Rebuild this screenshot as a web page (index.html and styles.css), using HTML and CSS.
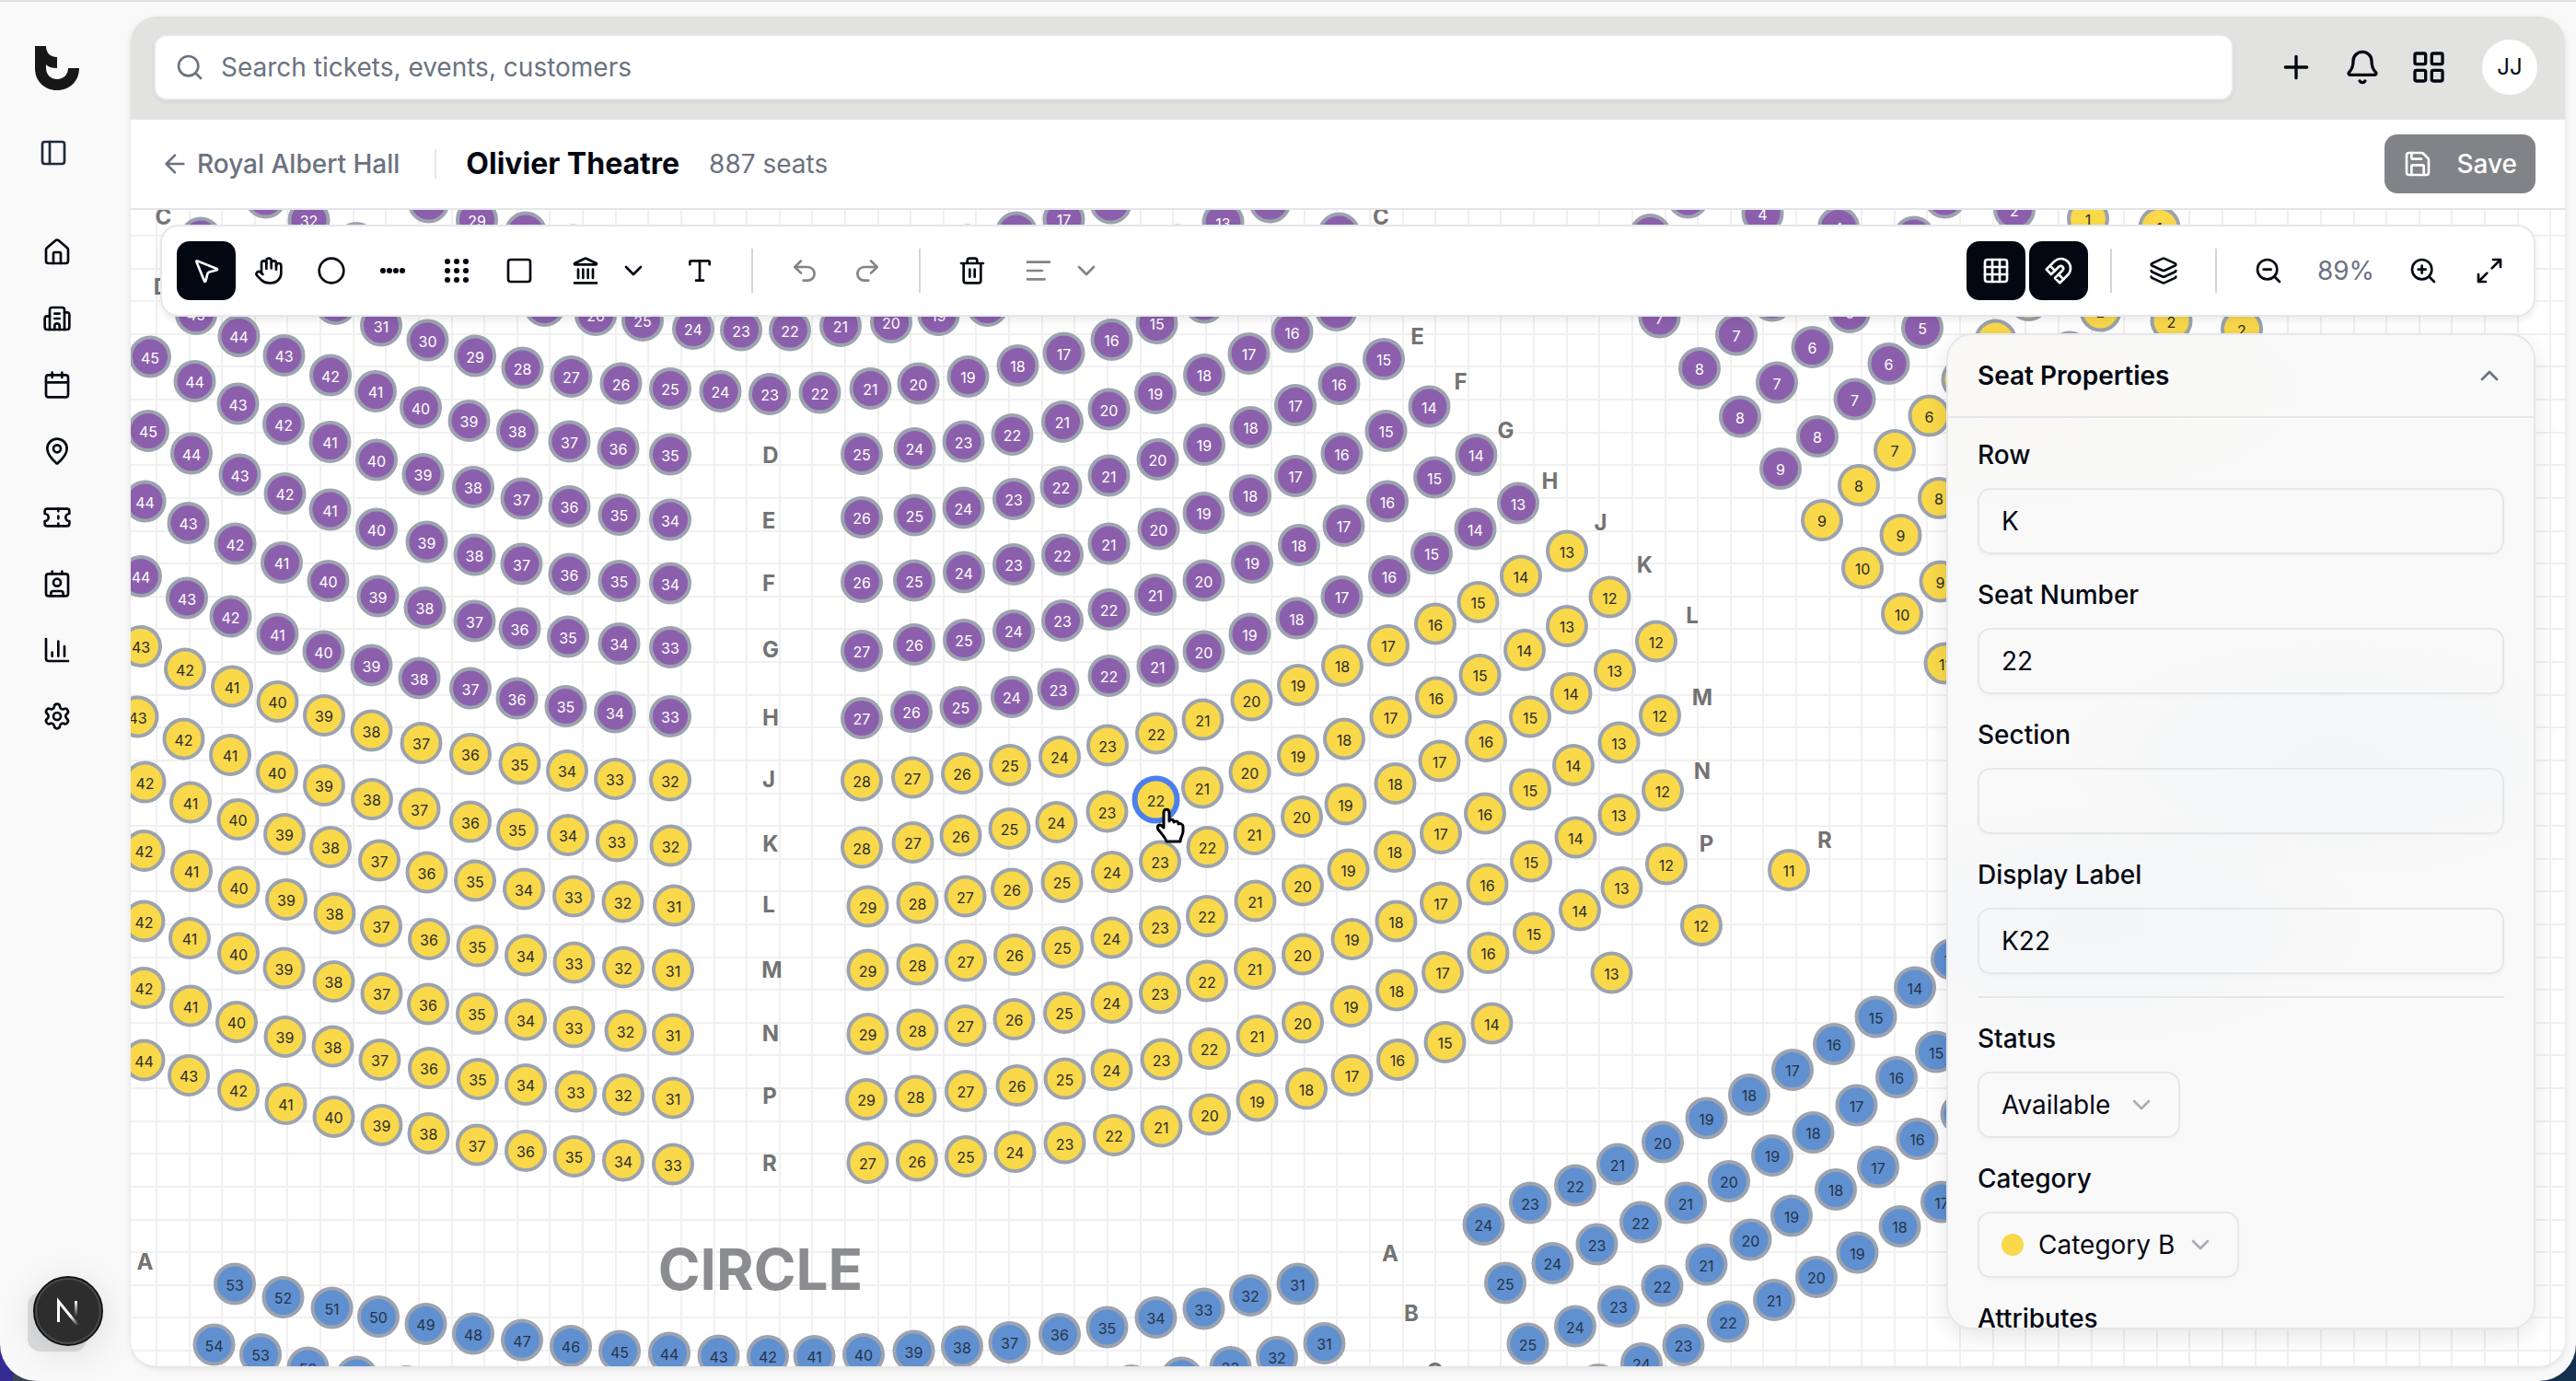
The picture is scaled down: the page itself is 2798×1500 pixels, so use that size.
FILE: index.html
```html
<!DOCTYPE html>
<html lang="en">
<head>
<meta charset="utf-8">
<title>Olivier Theatre – Seat map</title>
<link rel="stylesheet" href="styles.css">
</head>
<body>
<svg class="sprite" aria-hidden="true">
  <symbol id="i-search" viewBox="0 0 24 24"><circle cx="11" cy="11" r="8"/><path d="m21 21-4.34-4.34"/></symbol>
  <symbol id="i-plus" viewBox="0 0 24 24"><path d="M5 12h14M12 5v14"/></symbol>
  <symbol id="i-bell" viewBox="0 0 24 24"><path d="M10.268 21a2 2 0 0 0 3.464 0"/><path d="M3.262 15.326A1 1 0 0 0 4 17h16a1 1 0 0 0 .74-1.673C19.41 13.956 18 12.499 18 8A6 6 0 0 0 6 8c0 4.499-1.411 5.956-2.738 7.326"/></symbol>
  <symbol id="i-apps" viewBox="0 0 24 24"><rect x="3" y="3" width="7" height="7" rx="1"/><rect x="14" y="3" width="7" height="7" rx="1"/><rect x="14" y="14" width="7" height="7" rx="1"/><rect x="3" y="14" width="7" height="7" rx="1"/></symbol>
  <symbol id="i-panel" viewBox="0 0 24 24"><rect x="3" y="3" width="18" height="18" rx="2"/><path d="M9 3v18"/></symbol>
  <symbol id="i-house" viewBox="0 0 24 24"><path d="M15 21v-8a1 1 0 0 0-1-1h-4a1 1 0 0 0-1 1v8"/><path d="M3 10a2 2 0 0 1 .709-1.528l7-5.999a2 2 0 0 1 2.582 0l7 5.999A2 2 0 0 1 21 10v9a2 2 0 0 1-2 2H5a2 2 0 0 1-2-2z"/></symbol>
  <symbol id="i-building" viewBox="0 0 24 24"><path d="M10 12h4M10 8h4M14 21v-3a2 2 0 0 0-4 0v3"/><path d="M6 10H4a2 2 0 0 0-2 2v7a2 2 0 0 0 2 2h16a2 2 0 0 0 2-2V9a2 2 0 0 0-2-2h-2"/><path d="M6 21V5a2 2 0 0 1 2-2h8a2 2 0 0 1 2 2v16"/></symbol>
  <symbol id="i-calendar" viewBox="0 0 24 24"><path d="M8 2v4M16 2v4M3 10h18"/><rect x="3" y="4" width="18" height="18" rx="2"/></symbol>
  <symbol id="i-pin" viewBox="0 0 24 24"><path d="M20 10c0 4.993-5.539 10.193-7.399 11.799a1 1 0 0 1-1.202 0C9.539 20.193 4 14.993 4 10a8 8 0 0 1 16 0"/><circle cx="12" cy="10" r="3"/></symbol>
  <symbol id="i-ticket" viewBox="0 0 24 24"><path d="M2 9a3 3 0 0 1 0 6v2a2 2 0 0 0 2 2h16a2 2 0 0 0 2-2v-2a3 3 0 0 1 0-6V7a2 2 0 0 0-2-2H4a2 2 0 0 0-2 2Z"/><path d="M13 5v2M13 17v2M13 11v2"/></symbol>
  <symbol id="i-contact" viewBox="0 0 24 24"><path d="M16 2v2M8 2v2M7 22v-2a2 2 0 0 1 2-2h6a2 2 0 0 1 2 2v2"/><circle cx="12" cy="11" r="3"/><rect x="3" y="4" width="18" height="18" rx="2"/></symbol>
  <symbol id="i-chart" viewBox="0 0 24 24"><path d="M3 3v16a2 2 0 0 0 2 2h16M18 17V9M13 17V5M8 17v-3"/></symbol>
  <symbol id="i-settings" viewBox="0 0 24 24"><path d="M9.671 4.136a2.34 2.34 0 0 1 4.659 0 2.34 2.34 0 0 0 3.319 1.915 2.34 2.34 0 0 1 2.33 4.033 2.34 2.34 0 0 0 0 3.831 2.34 2.34 0 0 1-2.33 4.033 2.34 2.34 0 0 0-3.319 1.915 2.34 2.34 0 0 1-4.659 0 2.34 2.34 0 0 0-3.32-1.915 2.34 2.34 0 0 1-2.33-4.033 2.34 2.34 0 0 0 0-3.831A2.34 2.34 0 0 1 6.35 6.051a2.34 2.34 0 0 0 3.319-1.915"/><circle cx="12" cy="12" r="3"/></symbol>
  <symbol id="i-back" viewBox="0 0 24 24"><path d="m12 19-7-7 7-7M19 12H5"/></symbol>
  <symbol id="i-save" viewBox="0 0 24 24"><path d="M15.2 3a2 2 0 0 1 1.4.6l3.8 3.8a2 2 0 0 1 .6 1.4V19a2 2 0 0 1-2 2H5a2 2 0 0 1-2-2V5a2 2 0 0 1 2-2z"/><path d="M17 21v-7a1 1 0 0 0-1-1H8a1 1 0 0 0-1 1v7M7 3v4a1 1 0 0 0 1 1h7"/></symbol>
  <symbol id="i-pointer" viewBox="0 0 24 24"><path d="M4.037 4.688a.495.495 0 0 1 .651-.651l16 6.5a.5.5 0 0 1-.063.947l-6.124 1.58a2 2 0 0 0-1.438 1.435l-1.579 6.126a.5.5 0 0 1-.947.063z"/></symbol>
  <symbol id="i-hand" viewBox="0 0 24 24"><path d="M18 11V6a2 2 0 0 0-2-2a2 2 0 0 0-2 2"/><path d="M14 10V4a2 2 0 0 0-2-2a2 2 0 0 0-2 2v2"/><path d="M10 10.500V6a2 2 0 0 0-2-2a2 2 0 0 0-2 2v8"/><path d="M18 8a2 2 0 1 1 4 0v6a8 8 0 0 1-8 8h-2c-2.800 0-4.500-.860-5.990-2.340l-3.600-3.600a2 2 0 0 1 2.830-2.820L7 15"/></symbol>
  <symbol id="i-circle" viewBox="0 0 24 24"><circle cx="12" cy="12" r="10"/></symbol>
  <symbol id="i-row" viewBox="0 0 24 24"><g fill="currentColor" stroke="none"><circle cx="3" cy="12" r="2.300"/><circle cx="8.250" cy="12" r="2.300"/><circle cx="13.500" cy="12" r="2.300"/><circle cx="18.750" cy="12" r="2.300"/></g></symbol>
  <symbol id="i-block" viewBox="0 0 24 24"><g fill="currentColor" stroke="none"><circle cx="4.500" cy="4.500" r="2.300"/><circle cx="12" cy="4.500" r="2.300"/><circle cx="19.500" cy="4.500" r="2.300"/><circle cx="4.500" cy="12" r="2.300"/><circle cx="12" cy="12" r="2.300"/><circle cx="19.500" cy="12" r="2.300"/><circle cx="4.500" cy="19.500" r="2.300"/><circle cx="12" cy="19.500" r="2.300"/><circle cx="19.500" cy="19.500" r="2.300"/></g></symbol>
  <symbol id="i-square" viewBox="0 0 24 24"><rect x="3" y="3" width="18" height="18" rx="2"/></symbol>
  <symbol id="i-landmark" viewBox="0 0 24 24"><path d="M10 18v-7M14 18v-7M18 18v-7M6 18v-7M3 22h18"/><path d="M11.120 2.198a2 2 0 0 1 1.760.006l7.866 3.847c.476.233.310.949-.220.949H3.474c-.530 0-.695-.716-.220-.949z"/></symbol>
  <symbol id="i-down" viewBox="0 0 24 24"><path d="m6 9 6 6 6-6"/></symbol>
  <symbol id="i-up" viewBox="0 0 24 24"><path d="m18 15-6-6-6 6"/></symbol>
  <symbol id="i-type" viewBox="0 0 24 24"><path d="M12 4v16M4 7V5a1 1 0 0 1 1-1h14a1 1 0 0 1 1 1v2M9 20h6"/></symbol>
  <symbol id="i-undo" viewBox="0 0 24 24"><path d="M9 14 4 9l5-5"/><path d="M4 9h10.500a5.500 5.500 0 0 1 5.500 5.500a5.500 5.500 0 0 1-5.500 5.500H11"/></symbol>
  <symbol id="i-redo" viewBox="0 0 24 24"><path d="m15 14 5-5-5-5"/><path d="M20 9H9.500A5.500 5.500 0 0 0 4 14.500A5.500 5.500 0 0 0 9.500 20H13"/></symbol>
  <symbol id="i-trash" viewBox="0 0 24 24"><path d="M10 11v6M14 11v6M19 6v14a2 2 0 0 1-2 2H7a2 2 0 0 1-2-2V6M3 6h18M8 6V4a2 2 0 0 1 2-2h4a2 2 0 0 1 2 2v2"/></symbol>
  <symbol id="i-align" viewBox="0 0 24 24"><path d="M21 5H3M15 12H3M17 19H3"/></symbol>
  <symbol id="i-grid" viewBox="0 0 24 24"><rect x="3" y="3" width="18" height="18" rx="2"/><path d="M3 9h18M3 15h18M9 3v18M15 3v18"/></symbol>
  <symbol id="i-magnet" viewBox="0 0 24 24"><path d="m6 15-4-4 6.750-6.770a7.790 7.790 0 0 1 11 11L13 22l-4-4 6.390-6.360a2.140 2.140 0 0 0-3-3L6 15"/><path d="m5 8 4 4M12 15l4 4"/></symbol>
  <symbol id="i-layers" viewBox="0 0 24 24"><path d="M12.830 2.180a2 2 0 0 0-1.660 0L2.600 6.080a1 1 0 0 0 0 1.830l8.580 3.910a2 2 0 0 0 1.660 0l8.580-3.900a1 1 0 0 0 0-1.830z"/><path d="M2 12a1 1 0 0 0 .580.910l8.600 3.910a2 2 0 0 0 1.650 0l8.580-3.900A1 1 0 0 0 22 12"/><path d="M2 17a1 1 0 0 0 .580.910l8.600 3.910a2 2 0 0 0 1.650 0l8.580-3.900A1 1 0 0 0 22 17"/></symbol>
  <symbol id="i-out" viewBox="0 0 24 24"><circle cx="11" cy="11" r="8"/><path d="m21 21-4.350-4.350M8 11h6"/></symbol>
  <symbol id="i-in" viewBox="0 0 24 24"><circle cx="11" cy="11" r="8"/><path d="m21 21-4.350-4.350M8 11h6M11 8v6"/></symbol>
  <symbol id="i-expand" viewBox="0 0 24 24"><path d="M15 3h6v6M21 3l-7 7M3 21l7-7M9 21H3v-6"/></symbol>
</svg>

<div class="window">
  <aside class="sidebar">
    <a class="logo" href="#" aria-label="Home"><svg viewBox="0 0 48 48"><path d="M0 0H12C12 7 16 12 24 12V24C18 24 14 22.500 12 20V24C12 31 17 36 24 36S36 31 36 24H48C48 38 38 48 24 48S0 38 0 24Z"/></svg></a>
    <button class="side-btn toggle" aria-label="Toggle sidebar"><svg class="icon"><use href="#i-panel"/></svg></button>
    <nav class="nav">
      <a class="side-btn" href="#" aria-label="Dashboard"><svg class="icon"><use href="#i-house"/></svg></a>
      <a class="side-btn" href="#" aria-label="Venues"><svg class="icon"><use href="#i-building"/></svg></a>
      <a class="side-btn" href="#" aria-label="Events"><svg class="icon"><use href="#i-calendar"/></svg></a>
      <a class="side-btn" href="#" aria-label="Locations"><svg class="icon"><use href="#i-pin"/></svg></a>
      <a class="side-btn" href="#" aria-label="Tickets"><svg class="icon"><use href="#i-ticket"/></svg></a>
      <a class="side-btn" href="#" aria-label="Customers"><svg class="icon"><use href="#i-contact"/></svg></a>
      <a class="side-btn" href="#" aria-label="Reports"><svg class="icon"><use href="#i-chart"/></svg></a>
      <a class="side-btn" href="#" aria-label="Settings"><svg class="icon"><use href="#i-settings"/></svg></a>
    </nav>
    <div class="account">
      <button class="dev-badge" aria-label="Developer tools">
        <svg viewBox="0 0 76 76">
          <defs>
            <linearGradient id="n1" gradientUnits="userSpaceOnUse" x1="42" y1="42" x2="50" y2="53"><stop stop-color="#fff"/><stop offset="1" stop-color="#fff" stop-opacity="0"/></linearGradient>
            <linearGradient id="n2" gradientUnits="userSpaceOnUse" x1="46" y1="27" x2="46" y2="44"><stop stop-color="#fff"/><stop offset="1" stop-color="#fff" stop-opacity="0"/></linearGradient>
          </defs>
          <circle cx="38" cy="38" r="37" fill="#2d2d2d" stroke="#111" stroke-width="2"/>
          <circle cx="38" cy="38" r="35" fill="none" stroke="#4a4a4a" stroke-width="2"/>
          <path d="M27.500 50V27.500L49 54" fill="none" stroke="url(#n1)" stroke-width="3"/>
          <path d="M46.500 27V44" stroke="url(#n2)" stroke-width="3"/>
        </svg>
      </button>
    </div>
  </aside>

  <main class="card">
    <header class="topbar">
      <label class="search">
        <svg class="icon"><use href="#i-search"/></svg>
        <input type="text" placeholder="Search tickets, events, customers" aria-label="Search">
      </label>
      <div class="actions">
        <button class="action" aria-label="Create"><svg class="icon"><use href="#i-plus"/></svg></button>
        <button class="action" aria-label="Notifications"><svg class="icon"><use href="#i-bell"/></svg></button>
        <button class="action" aria-label="Apps"><svg class="icon"><use href="#i-apps"/></svg></button>
      </div>
      <button class="avatar">JJ</button>
    </header>

    <div class="subheader">
      <a class="back" href="#"><svg class="icon"><use href="#i-back"/></svg>Royal Albert Hall</a>
      <h1 class="title">Olivier Theatre</h1>
      <span class="count">887 seats</span>
      <button class="save"><svg class="icon"><use href="#i-save"/></svg>Save</button>
    </div>

    <section class="stage">
      <svg class="map" id="map" role="img" aria-label="Seat map"></svg>

      <div class="toolbar" role="toolbar">
        <div class="tools">
          <button class="tool active" aria-label="Select"><svg class="icon"><use href="#i-pointer"/></svg></button>
          <button class="tool" aria-label="Pan"><svg class="icon"><use href="#i-hand"/></svg></button>
          <button class="tool" aria-label="Seat"><svg class="icon"><use href="#i-circle"/></svg></button>
          <button class="tool" aria-label="Row"><svg class="icon"><use href="#i-row"/></svg></button>
          <button class="tool" aria-label="Block"><svg class="icon"><use href="#i-block"/></svg></button>
          <button class="tool" aria-label="Shape"><svg class="icon"><use href="#i-square"/></svg></button>
          <button class="tool wide" aria-label="Objects"><svg class="icon"><use href="#i-landmark"/></svg><svg class="icon"><use href="#i-down"/></svg></button>
          <button class="tool" aria-label="Text"><svg class="icon"><use href="#i-type"/></svg></button>
        </div>
        <span class="sep"></span>
        <div class="tools">
          <button class="tool" disabled aria-label="Undo"><svg class="icon"><use href="#i-undo"/></svg></button>
          <button class="tool" disabled aria-label="Redo"><svg class="icon"><use href="#i-redo"/></svg></button>
        </div>
        <span class="sep"></span>
        <div class="tools">
          <button class="tool" aria-label="Delete"><svg class="icon"><use href="#i-trash"/></svg></button>
          <button class="tool wide" disabled aria-label="Align"><svg class="icon"><use href="#i-align"/></svg><svg class="icon"><use href="#i-down"/></svg></button>
        </div>
        <div class="tools end">
          <button class="tool active" aria-label="Grid"><svg class="icon"><use href="#i-grid"/></svg></button>
          <button class="tool active" aria-label="Snap"><svg class="icon"><use href="#i-magnet"/></svg></button>
        </div>
        <span class="sep"></span>
        <button class="tool" aria-label="Layers"><svg class="icon"><use href="#i-layers"/></svg></button>
        <span class="sep"></span>
        <div class="zoom">
          <button class="tool" aria-label="Zoom out"><svg class="icon"><use href="#i-out"/></svg></button>
          <span class="level">89%</span>
          <button class="tool" aria-label="Zoom in"><svg class="icon"><use href="#i-in"/></svg></button>
          <button class="tool" aria-label="Full screen"><svg class="icon"><use href="#i-expand"/></svg></button>
        </div>
      </div>

      <form class="panel">
        <div class="panel-head">
          <h2>Seat Properties</h2>
          <button type="button" class="collapse" aria-label="Collapse"><svg class="icon"><use href="#i-up"/></svg></button>
        </div>
        <div class="panel-body">
          <div class="field"><label for="row">Row</label><input id="row" type="text" value="K"></div>
          <div class="field"><label for="number">Seat Number</label><input id="number" type="text" value="22"></div>
          <div class="field"><label for="section">Section</label><input id="section" type="text" value=""></div>
          <div class="field"><label for="display">Display Label</label><input id="display" type="text" value="K22"></div>
          <hr>
          <div class="field"><label for="status">Status</label>
            <div class="picker status"><select id="status"><option>Available</option></select><svg class="icon"><use href="#i-down"/></svg></div></div>
          <div class="field"><label for="category">Category</label>
            <div class="picker category"><span class="dot"></span><select id="category"><option>Category B</option></select><svg class="icon"><use href="#i-down"/></svg></div></div>
          <h3>Attributes</h3>
        </div>
      </form>
    </section>
  </main>
</div>
<script src="seats.js"></script>
</body>
</html>
```
FILE: styles.css
```css
* { box-sizing: border-box; }

body {
  margin: 0;
  background: linear-gradient(90deg, #352b93 0 14px, #3b4453 14px 50%, #14304f 50%);
  font-family: Inter, "Liberation Sans", sans-serif;
  font-size: 28px;
  line-height: 32px;
  color: #030712;
}

button, input, select { font: inherit; color: inherit; }
button { border: 0; padding: 0; background: none; }
a { color: inherit; text-decoration: none; }
h1, h2, h3 { margin: 0; }

.sprite { position: absolute; width: 0; height: 0; }

.icon {
  display: block;
  flex: none;
  width: 32px;
  height: 32px;
  fill: none;
  stroke: currentColor;
  stroke-width: 2;
  stroke-linecap: round;
  stroke-linejoin: round;
}

.window {
  display: flex;
  height: 100vh;
  padding: 16px 12px 16px 0;
  border-top: 2px solid #e2e2e2;
  border-radius: 0 0 40px 40px;
  background: #f9f9f9;
}

/* Sidebar */
.sidebar {
  display: flex;
  flex-direction: column;
  align-items: center;
  width: 142px;
  padding: 32px 18px 0 0;
}
.logo { width: 48px; height: 48px; }
.logo svg { display: block; fill: #171717; }
.side-btn { display: block; }
.toggle { margin: 52px 8px 76px 0; color: #1e293b; }
.nav { display: flex; flex-direction: column; gap: 40px; }
.account {
  width: 64px;
  height: 64px;
  margin-top: auto;
  margin-bottom: 16px;
  border-radius: 14px;
  background: #dcdee0;
}
.dev-badge {
  position: absolute;
  width: 76px;
  height: 76px;
  margin: -18px 0 0 6px;
  border-radius: 50%;
  box-shadow: 0 8px 40px rgba(0, 0, 0, .12);
}
.dev-badge svg { display: block; }

/* Card */
.card {
  display: flex;
  flex: 1;
  flex-direction: column;
  min-width: 0;
  overflow: hidden;
  border-radius: 28px;
  background: #fff;
  box-shadow: 0 2px 6px rgba(0, 0, 0, .12);
}
.topbar {
  display: flex;
  align-items: center;
  height: 112px;
  padding: 0 30px 0 25px;
  border-bottom: 2px solid #e4e5e9;
  background: #e2e2e0;
}
.search {
  display: flex;
  flex: 1;
  align-items: center;
  gap: 18px;
  height: 72px;
  margin-right: 48px;
  padding: 0 21px;
  border: 2px solid #e5e7eb;
  border-radius: 14px;
  background: #fff;
  box-shadow: 0 2px 4px rgba(0, 0, 0, .06);
  color: #6b7280;
}
.search input { flex: 1; padding: 0; border: 0; outline: 0; background: none; }
.search input::placeholder { color: #6b7280; opacity: 1; }
.actions { display: flex; gap: 32px; }
.action .icon { width: 40px; height: 40px; }
.avatar {
  width: 60px;
  height: 60px;
  margin-left: 38px;
  border-radius: 50%;
  background: #fff;
  font-size: 24px;
}

.subheader {
  display: flex;
  align-items: center;
  height: 98px;
  padding: 0 32px;
  border-bottom: 2px solid #e4e5e9;
}
.back {
  display: flex;
  align-items: center;
  gap: 8px;
  padding-right: 38px;
  border-right: 2px solid #e5e7eb;
  font-weight: 500;
  color: #6b7280;
}
.title { margin-left: 32px; font-size: 32px; font-weight: 700; }
.count { margin-left: 32px; color: #6b7280; }
.save {
  display: flex;
  align-items: center;
  gap: 26px;
  height: 64px;
  margin-left: auto;
  padding: 0 20px;
  border-radius: 14px;
  background: #828387;
  color: #fff;
  font-weight: 500;
}

/* Stage */
.stage { position: relative; flex: 1; min-height: 0; }
.map { display: block; width: 100%; height: 100%; }
.grid-line { stroke: #f0f0f0; stroke-width: 2; }
.seat { stroke: #9ca3af; stroke-width: 4; }
.seat.a { fill: #8c5fad; }
.seat.b { fill: #f9d84a; }
.seat.c { fill: #6090d0; }
.seat.selected { stroke: #4b7fef; stroke-width: 6; }
.num { font-size: 16px; text-anchor: middle; }
.num.a { fill: #fff; }
.num.b { fill: #2b2b2b; }
.num.c { fill: #243349; }
.row-label { font-size: 24px; font-weight: 700; text-anchor: middle; fill: #737373; }
.area-label { font-size: 62px; font-weight: 700; text-anchor: middle; fill: #8b8c90; }
.cursor { fill: #fff; stroke: #000; stroke-width: 3; stroke-linejoin: round; stroke-linecap: round; }

/* Toolbar floats over the map */
.toolbar {
  position: absolute;
  top: 16px;
  left: 32px;
  right: 32px;
  display: flex;
  align-items: center;
  height: 100px;
  padding: 0 16px;
  border: 2px solid #e5e7eb;
  border-radius: 20px;
  background: #fff;
  box-shadow: 0 4px 8px rgba(0, 0, 0, .08);
}
.tools { display: flex; gap: 4px; }
.tools.end { margin-left: auto; }
.tool {
  display: flex;
  align-items: center;
  justify-content: center;
  gap: 20px;
  width: 64px;
  height: 64px;
  border-radius: 14px;
}
.tool.wide { width: 124px; }
.tool.active { background: #030712; color: #fff; }
.tool:disabled { color: #838488; }
.sep { width: 2px; height: 48px; margin: 0 24px; background: #d1d5db; }
.zoom { display: flex; align-items: center; gap: 8px; }
.level { width: 88px; text-align: center; color: #6b7280; }

/* Properties panel floats over the map */
.panel {
  position: absolute;
  top: 134px;
  right: 32px;
  bottom: 40px;
  width: 640px;
  overflow: hidden;
  border: 2px solid #e5e7eb;
  border-radius: 28px;
  background:
    radial-gradient(ellipse 320px 130px at 80px 60px, rgba(249, 216, 74, .03), transparent),
    radial-gradient(ellipse 300px 130px at 420px 460px, rgba(96, 144, 208, .04), transparent),
    radial-gradient(ellipse 300px 130px at 160px 640px, rgba(96, 144, 208, .04), transparent),
    #f9f9f9;
  box-shadow: 0 8px 24px rgba(0, 0, 0, .1);
}
.panel-head {
  display: flex;
  align-items: center;
  justify-content: space-between;
  height: 90px;
  padding: 0 32px;
  border-bottom: 2px solid #e5e7eb;
}
.panel-head h2, .panel-body h3 { font-size: 28px; font-weight: 600; }
.collapse { color: #6b7280; }
.panel-body { display: flex; flex-direction: column; gap: 28px; padding: 24px 32px; }
.panel-body h3, .field label { font-weight: 500; }
.field { display: flex; flex-direction: column; gap: 20px; }
.field input, .picker {
  height: 72px;
  padding: 0 24px;
  border: 2px solid #e5e7eb;
  border-radius: 14px;
  outline: 0;
  background: none;
  box-shadow: 0 2px 3px rgba(0, 0, 0, .03);
}
.panel-body hr { width: 100%; height: 2px; margin: -4px 0 0; border: 0; background: #e5e7eb; }
.picker { display: flex; align-items: center; }
.picker.status { width: 220px; }
.picker.category { width: 284px; }
.picker select { flex: 1; min-width: 0; padding: 0; border: 0; outline: 0; background: none; appearance: none; }
.picker .icon { color: #a9adb5; }
.dot { width: 24px; height: 24px; margin-right: 16px; border-radius: 50%; background: #f9d84a; }
```
FILE: seats.js
```js
// Seat plan of the circle. Coordinates are plan units; SCALE turns them
// into screen pixels at the current zoom, and ORIGIN is the visible corner.
const SCALE = 1.7845;
const ORIGIN = { x: 79.6, y: 127.8 };
const GRID = 35.62;

// [category, first seat number, x, y, x, y, ...]; numbers count down.
const rows = [
  ['a', 34, 122.3, 144.8],
  ['a', 33, 161.6, 120.3, 187.9, 134.1, 217, 148],
  ['a', 30, 260.9, 123, 290.2, 133.7, 320, 141.4, 349, 149.5],
  ['a', 19, 589, 149.5, 618.8, 141.4, 647.6, 133.5, 676, 123.6],
  ['a', 14, 717, 149.5, 744.4, 135.4, 773, 123],
  ['a', 12, 815, 142],
  ['a', 27, 331.5, 186, 362.5, 191.7, 391.3, 195, 421.9, 200, 451.1, 201, 480.9, 201, 511.6, 198.5, 542.4, 196.1, 571.4, 191.8, 601.1, 186],
  ['a', 32, 204.4, 185, 232, 198, 260.2, 207, 289.2, 216.7, 318, 224, 347.7, 229.2, 378, 233.4, 407.9, 236.6, 438.6, 238.3, 468.4, 240, 499.1, 239.1, 529.9, 236.4, 558.9, 233.3, 589.4, 229.2, 619.4, 222.4, 647.6, 215, 676.6, 206.7, 704.1, 196.8, 733, 184],
  ['a', 45, 119.5, 191, 145.5, 204.5, 173, 216.3, 201.3, 228.3, 228.7, 238.2, 256, 248, 285.5, 256, 315, 262, 346.7, 268.7, 376.3, 273, 408, 276.5],
  ['a', 45, 91.3, 217.2, 118.5, 232, 145, 245.7, 172.5, 258.2, 201, 269, 229.2, 279.9, 257.5, 288.6, 288, 296.5, 317.5, 303.4, 346.7, 308.3, 377, 313.3, 408, 316.5],
  ['a', 45, 90.3, 262.3, 116.7, 276.1, 146, 288.8, 173.5, 300.4, 201, 310.1, 229.2, 322.1, 259.7, 329.9, 289, 337.8, 317.5, 343.4, 346.7, 349.4, 377, 353.5, 408, 355],
  ['a', 44, 88.3, 305.3, 114.7, 318.2, 143.2, 330.9, 171.5, 342.4, 199.7, 353.5, 230.2, 363, 258.7, 369.9, 289, 377.9, 316.5, 382.6, 345.7, 387.6, 377, 391.6, 408, 394],
  ['a', 44, 85.7, 350.7, 113.7, 363.9, 140.5, 375.1, 169, 385.8, 197, 396.6, 226, 404.8, 255.3, 412.7, 286.3, 419, 314.8, 425, 344.5, 429.9, 374.3, 433.6, 408, 436],
  ['b', 43, 85.7, 393.4, 112.7, 407.1, 141.3, 417.9, 169, 427.1, 197.3, 435.5, 226, 444.8, 256.3, 452.3, 286.3, 459, 316.5, 465, 345.3, 469.1, 374.5, 474.1, 408, 475],
  ['b', 43, 83.7, 436.4, 111.7, 449.8, 140, 459.6, 168.7, 469.8, 197.3, 477.9, 226.3, 486.5, 255.3, 492.4, 286.3, 500.3, 315, 505, 345.7, 508.4, 375.4, 512, 408.3, 514.8],
  ['b', 42, 88.3, 476, 116, 488.3, 145, 498.8, 173.3, 507.7, 201.3, 515.5, 231, 523.8, 259.9, 531.1, 289.3, 536, 318.8, 541.2, 349.1, 545.5, 379.1, 548.9, 410.3, 551.1],
  ['b', 42, 87.8, 517.8, 116.7, 530.2, 145.5, 540.1, 174.4, 547.4, 203.6, 555.8, 231.9, 563.7, 261.3, 571.6, 290.5, 575.7, 319.9, 581.3, 349.4, 585.8, 379.4, 588.6, 409.7, 590.5],
  ['b', 42, 87.8, 560.7, 115.5, 571, 145.2, 580.4, 173, 589.4, 203.3, 597.4, 232.4, 604.7, 260.5, 611.1, 290.2, 616.9, 319.9, 620.7, 349.4, 625, 380.8, 627.4, 409.7, 629.5],
  ['b', 42, 87.8, 601.2, 116.1, 612.2, 144.1, 622, 173.5, 631, 202.7, 637, 231.3, 645, 261.3, 650.1, 291, 656.8, 319.9, 660.2, 350.5, 664.3, 379.4, 666.2, 409.7, 668.4],
  ['b', 44, 87.8, 645.4, 114.9, 654.6, 145.2, 663.4, 174.1, 672, 203.3, 679.7, 232.2, 684.9, 261, 690, 290.2, 696.9, 319.9, 700.5, 349.4, 704, 379.4, 706.3, 409.7, 708.7],
  ['a', 25, 524.6, 276.4, 556.8, 273, 586.6, 268.8, 616.1, 264.5, 646.6, 256.6, 675.1, 249.1, 703.3, 239.2, 733.1, 228, 760.1, 215.1, 786.6, 202, 813.5, 189],
  ['a', 26, 524.6, 314.9, 556.8, 313.6, 586.6, 309.1, 617.1, 303.7, 645.8, 296.4, 675.1, 289.5, 704.6, 279.6, 733.1, 270.8, 761.3, 260, 788.6, 246.7, 815.1, 233.6, 842.4, 218.5],
  ['a', 26, 524.6, 354.3, 556.6, 353.4, 586.8, 348.3, 617.1, 343.5, 646.6, 337.7, 675.1, 330.8, 705.3, 322, 732.6, 312.1, 761.1, 301.4, 788.6, 289.7, 816.8, 276, 843.6, 262.3, 870, 247.5],
  ['a', 27, 524.6, 396.3, 556.6, 392.4, 586.8, 389.6, 617.1, 383.8, 646.6, 377.8, 675.1, 370.9, 703.3, 362.1, 732.8, 353.4, 762.1, 342.5, 790.6, 331.7, 817.8, 319.9, 844.5, 305.3, 873, 290.6, 898.5, 277],
  ['a', 27, 524.6, 437, 554.8, 433.3, 584.8, 430.5, 615.8, 424.2, 644.1, 419.5, 675.1, 411.3, 704.8, 405.5, 732.8, 396.5, 760.8, 385.9, 789.3, 376.3, 816.8, 363.1, 845.7, 350.8, 871.4, 336.9, 898, 322, 924.2, 306.4],
  ['b', 28, 524.6, 475, 555.3, 473.3, 585.6, 470.7, 614.8, 465.6, 645.1, 460.6, 674.3, 453.7, 703.8, 446.4, 732.3, 438, 761.8, 426.2, 790.3, 416.9, 817.1, 405.1, 845.2, 392.8, 873.7, 379.8, 899.7, 366.6, 925.9, 350.5, 953.7, 335.4],
  ['b', 28, 524.5, 515.8, 555.6, 512.8, 584.7, 508.7, 614.5, 504.5, 643.1, 500.4, 674, 494, 703.5, 486.8, 732, 479.5, 760.8, 469.9, 790.3, 459.8, 818.3, 449.8, 846.4, 436.6, 874.2, 424.6, 900.9, 410.7, 928, 395.8, 953.9, 381, 979.9, 363.5],
  ['b', 29, 528.3, 551.7, 558.4, 549.6, 587.5, 545.7, 615.8, 541.1, 646.4, 536.8, 677.1, 530.6, 706.1, 524.4, 735, 515.5, 763.5, 507.7, 792.4, 497.2, 819.1, 489.4, 849.2, 477, 876.1, 463.3, 904.4, 451, 931.3, 436.4, 956.3, 422, 982.9, 408.1, 1008.2, 390.2],
  ['b', 29, 528.1, 590.3, 558.4, 587.1, 587.8, 584.8, 617.6, 581.2, 646.7, 576.8, 676.8, 570.9, 706.1, 564, 734.7, 557.6, 764, 548.5, 792.9, 538.9, 820.7, 529.2, 849, 518.3, 877, 507.1, 903.9, 495.2, 931.3, 480.5, 957.7, 465.6, 985.5, 452, 1010.5, 435.5],
  ['b', 29, 528.3, 629.4, 558.4, 626.9, 587.5, 624.4, 617.4, 620.5, 647.7, 616.4, 676.8, 610.4, 706.1, 604.5, 734.7, 597.2, 763.8, 589.6, 793.1, 580.9, 823, 571.6, 849.9, 560.8, 877, 549.6, 905.3, 538.2, 932, 524.2, 959.1, 509.6, 985.5, 495.9, 1012, 481],
  ['b', 29, 527.3, 669.2, 557.4, 667.2, 588, 664, 618.9, 660.8, 648, 656.6, 676.8, 651.2, 706.9, 644.8, 736, 638.3, 765.3, 630.6, 793.1, 622.3, 822.5, 612.5, 850.2, 602.7, 878.2, 591.9, 905.8, 580, 933.6, 567.9, 961.5, 554, 987.2, 540.2, 1014.3, 526],
  ['b', 27, 528.1, 707.9, 558.2, 706.3, 587.8, 703.8, 617.9, 701, 648, 695.8, 678.1, 691, 706.9, 685.7, 736.5, 678.4, 765.1, 670.1, 795.2, 662.6, 823, 654.6, 850.6, 645, 879.6, 634.5, 908.2, 622.8, 981.1, 592.1, 1035.5, 563.1, 1088.8, 529.5],
  ['c', 53, 143, 781.6, 172.4, 789.5, 202.1, 796, 230.4, 801.3, 259.3, 805.8, 288.2, 811.8, 317.9, 815.7, 347.4, 819.3, 377.1, 822.3, 407.4, 823.6, 437.4, 825.1, 467.3, 825.5, 495.6, 825.5, 525.8, 824.3, 556.1, 822.3, 585.7, 819.5, 614.5, 817, 644.9, 812, 674, 807.8, 703.6, 801.9, 732.7, 796.6, 761, 788.6, 789.8, 781.5],
  ['c', 54, 130.4, 818.5, 158.7, 824.3, 187.6, 832.4, 217.3, 838.2, 247.3, 844],
  ['c', 35, 688.6, 843.5, 719.3, 838.7, 748.9, 832.3, 777.2, 826.1, 806.2, 817.7],
  ['c', 24, 903, 745.2, 931.3, 732.1, 958.9, 721.6, 984.6, 708.6, 1012.2, 695.3, 1038.6, 680.7, 1064.8, 666.3, 1091.2, 651.2, 1116.2, 635.4, 1141.9, 618.9, 1165.5, 601.1, 1188, 584],
  ['c', 25, 916.2, 780.8, 945.2, 769, 972.1, 757.3, 998.5, 744, 1026.1, 732.1, 1052.5, 718.9, 1078.7, 703.3, 1103.7, 689.4, 1129.9, 672.9, 1154.4, 655.7, 1178.5, 640.2],
  ['c', 25, 930.1, 817.9, 958.9, 807.2, 985.3, 795.3, 1011.7, 782.7, 1038.6, 769.6, 1065.5, 754.5, 1090.5, 740.1, 1117.4, 724.1, 1143.1, 710.4, 1166.9, 693.2, 1194, 678],
  ['c', 25, 972.8, 842.8, 999.2, 830, 1024.7, 818.8, 1051.8, 804.6, 1079.9, 791.4, 1105.6, 777.4, 1130.6, 762.3, 1156.3, 746.5, 1182, 731.7],
  ['a', 5, 1004.4, 143, 1027.5, 120.1],
  ['a', 4, 1073, 130], ['a', 4, 1119, 138.5],
  ['a', 3, 1165, 144.2, 1183.8, 120.1], ['a', 2, 1226.2, 127.6],
  ['b', 1, 1271, 133], ['b', 1, 1314.4, 138.5],
  ['a', 7, 1010, 193.2], ['a', 6, 1078.7, 183.1],
  ['a', 8, 1034.6, 224.1, 1057, 203.6],
  ['a', 8, 1059.1, 253.6, 1081.5, 232.9, 1103.2, 211.4, 1125.9, 189.9],
  ['a', 9, 1083.7, 285.2, 1106.3, 265.6, 1128.9, 243, 1149.7, 221.5, 1170.2, 199.5],
  ['b', 9, 1108.9, 316.6, 1131.5, 295.4, 1153.2, 274.1, 1174.2, 253.1, 1194.5, 231, 1214.6, 207, 1234.9, 182.7],
  ['b', 10, 1133.7, 345.8, 1156.8, 325.5, 1180.1, 303.1],
  ['b', 10, 1157.7, 373.4, 1181, 354],
  ['b', 11, 1183.9, 403.9],
  ['b', 3, 1259.8, 214.3, 1278.5, 189.2],
  ['b', 2, 1321.6, 195.2], ['b', 2, 1364.5, 200.4]
];

const labels = [
  ['C', 99.5, 132], ['D', 98.5, 174.5], ['C', 840.5, 132],
  ['D', 469, 277.5], ['E', 468, 316.8], ['F', 468, 354.9], ['G', 469, 395.8], ['H', 469, 437.2], ['J', 468, 474.5],
  ['K', 469, 513.5], ['L', 468, 550.7], ['M', 470, 590.5], ['N', 469, 629], ['P', 468.6, 667.2], ['R', 468.6, 708.1],
  ['E', 862.7, 204.8], ['F', 889, 232.4], ['G', 916.4, 262.1], ['H', 943.5, 292.8], ['J', 974.2, 318],
  ['K', 1001.1, 343.9], ['L', 1030.1, 374.6], ['M', 1036.2, 424.6], ['N', 1036.2, 469.4], ['P', 1038.6, 513.5],
  ['R', 1110.8, 511.4], ['A', 846.1, 763], ['B', 859.1, 799.8], ['C', 873.5, 834.6], ['A', 88.3, 767.9]
];

const map = document.getElementById('map');
const px = x => Math.round((x - ORIGIN.x) * SCALE * 2) / 2;
const py = y => Math.round((y - ORIGIN.y) * SCALE * 2) / 2;

function add(tag, attrs, text) {
  const el = document.createElementNS('http://www.w3.org/2000/svg', tag);
  for (const key in attrs) el.setAttribute(key, attrs[key]);
  if (text !== undefined) el.textContent = text;
  map.appendChild(el);
}

const box = map.getBoundingClientRect();
for (let i = 0; 28 + i * GRID < box.width; i++) {
  const x = Math.round(28 + i * GRID);
  add('line', { class: 'grid-line', x1: x, x2: x, y1: 0, y2: box.height });
}
for (let i = 0; 28 + i * GRID < box.height; i++) {
  const y = Math.round(28 + i * GRID);
  add('line', { class: 'grid-line', x1: 0, x2: box.width, y1: y, y2: y });
}

// A number is skipped when it would lie outside the map or under the toolbar.
const hidden = y => y < -3 || (y > 21 && y < 106) || y > box.height + 6;

for (const [cat, first, ...pts] of rows) {
  for (let i = 0; i < pts.length; i += 2) {
    const x = px(pts[i]);
    const y = py(pts[i + 1]);
    const picked = pts[i] === 703.5 && pts[i + 1] === 486.8;
    add('circle', { class: 'seat ' + cat + (picked ? ' selected' : ''), cx: x, cy: y, r: picked ? 23 : 21 });
    if (!hidden(y)) add('text', { class: 'num ' + cat, x: x, y: y + 7 }, first - i / 2);
  }
}

for (const [name, x, y] of labels) add('text', { class: 'row-label', x: px(x), y: py(y) + 8 }, name);
add('text', { class: 'area-label', x: px(462.8), y: py(771.9) + 23 }, 'CIRCLE');

// Pointer resting on the selected seat
add('path', {
  class: 'cursor',
  transform: 'translate(1114 650)',
  d: 'M8 20V5C8 0 14 0 14 5V14C15 11 19 12 19 15C21 13 24 14 24 17C26 16 29 17 29 20V25C29 29 26 31 26 36H11C10 32 6 28 2 23C0 19 3 17 6 19L8 21'
});
```
